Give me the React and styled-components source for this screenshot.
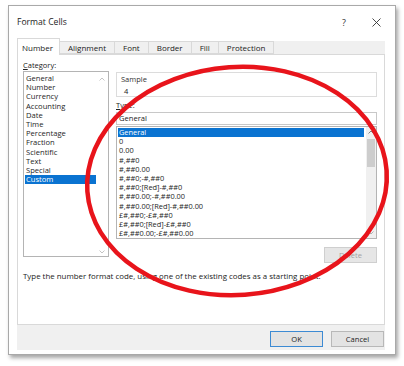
import React from 'react';
import styled, { createGlobalStyle } from 'styled-components';

const GlobalStyle = createGlobalStyle`
  html, body {
    margin: 0;
    padding: 0;
    background: #ffffff;
  }
  body {
    font-family: "Open Sans", "Noto Sans", sans-serif;
    color: #1a1a1a;
  }
`;

const categories = [
  'General', 'Number', 'Currency', 'Accounting', 'Date', 'Time',
  'Percentage', 'Fraction', 'Scientific', 'Text', 'Special', 'Custom'
];

const formats = [
  'General',
  '0',
  '0.00',
  '#,##0',
  '#,##0.00',
  '#,##0;-#,##0',
  '#,##0;[Red]-#,##0',
  '#,##0.00;-#,##0.00',
  '#,##0.00;[Red]-#,##0.00',
  '£#,##0;-£#,##0',
  '£#,##0;[Red]-£#,##0',
  '£#,##0.00;-£#,##0.00'
];

const tabs = ['Number', 'Alignment', 'Font', 'Border', 'Fill', 'Protection'];

const App = () => {
  return (
    <>
      <GlobalStyle />
      <Page>
        <Window>
          <TitleBar>
            <Title>Format Cells</Title>
            <TitleButtons>
              <HelpGlyph>?</HelpGlyph>
              <CloseGlyph>
                <svg width="9" height="9" viewBox="0 0 9 9">
                  <path d="M0.5 0.5 L8.5 8.5 M8.5 0.5 L0.5 8.5" stroke="#333" strokeWidth="0.9" fill="none" />
                </svg>
              </CloseGlyph>
            </TitleButtons>
          </TitleBar>

          <Body>
            <TabRow>
              {tabs.map((tab, i) => (
                <Tab key={tab} $active={i === 0}>{tab}</Tab>
              ))}
            </TabRow>

            <Panel>
              <Columns>
                <LeftColumn>
                  <FieldLabel><u>C</u>ategory:</FieldLabel>
                  <CategoryList>
                    {categories.map(c => (
                      <ListItem key={c} $selected={c === 'Custom'}>{c}</ListItem>
                    ))}
                    <ScrollArrow $top>
                      <svg width="6" height="4" viewBox="0 0 6 4"><path d="M0.5 3.5 L3 1 L5.5 3.5" stroke="#b5b5b5" strokeWidth="0.8" fill="none" /></svg>
                    </ScrollArrow>
                    <ScrollArrow>
                      <svg width="6" height="4" viewBox="0 0 6 4"><path d="M0.5 0.5 L3 3 L5.5 0.5" stroke="#b5b5b5" strokeWidth="0.8" fill="none" /></svg>
                    </ScrollArrow>
                  </CategoryList>
                </LeftColumn>

                <RightColumn>
                  <SampleBox>
                    <SampleLabel>Sample</SampleLabel>
                    <SampleValue>4</SampleValue>
                  </SampleBox>
                  <TypeLabel><u>T</u>ype:</TypeLabel>
                  <TypeInput>General</TypeInput>
                  <FormatList>
                    <FormatItems>
                      {formats.map((f, i) => (
                        <ListItem key={i} $selected={i === 0} $mono>{f}</ListItem>
                      ))}
                    </FormatItems>
                    <ScrollBar>
                      <ScrollButton>
                        <svg width="6" height="4" viewBox="0 0 6 4"><path d="M0.5 3.5 L3 1 L5.5 3.5" stroke="#606060" strokeWidth="0.8" fill="none" /></svg>
                      </ScrollButton>
                      <ScrollTrack>
                        <ScrollThumb />
                      </ScrollTrack>
                      <ScrollButton>
                        <svg width="6" height="4" viewBox="0 0 6 4"><path d="M0.5 0.5 L3 3 L5.5 0.5" stroke="#a0a0a0" strokeWidth="0.8" fill="none" /></svg>
                      </ScrollButton>
                    </ScrollBar>
                  </FormatList>
                  <ButtonRow>
                    <DeleteButton disabled>Delete</DeleteButton>
                  </ButtonRow>
                </RightColumn>
              </Columns>
              <Hint>Type the number format code, using one of the existing codes as a starting point.</Hint>
            </Panel>

            <Footer>
              <DialogButton $primary>OK</DialogButton>
              <DialogButton>Cancel</DialogButton>
            </Footer>
          </Body>
        </Window>

        <Circle width="404" height="366" viewBox="0 0 404 366">
          <ellipse cx="237" cy="181" rx="150" ry="114" transform="rotate(-4 237 181)" fill="none" stroke="#e8141b" strokeWidth="4.5" />
        </Circle>
      </Page>
    </>
  );
};

const Page = styled.div`
  position: relative;
  width: 404px;
  height: 366px;
  padding: 5px 0 0 8px;
  box-sizing: border-box;
  overflow: hidden;
`;

const Window = styled.div`
  width: 388px;
  height: 350px;
  box-sizing: border-box;
  background: #ffffff;
  border: 1px solid #a9a9a9;
  box-shadow: 2px 3px 4px rgba(0, 0, 0, 0.35);
  display: flex;
  flex-direction: column;
`;

const TitleBar = styled.div`
  height: 32px;
  display: flex;
  align-items: center;
  justify-content: space-between;
  padding: 0 14px 0 8px;
  box-sizing: border-box;
`;

const Title = styled.div`
  font-size: 8.6px;
  color: #222;
`;

const TitleButtons = styled.div`
  display: flex;
  align-items: center;
  gap: 26px;
`;

const HelpGlyph = styled.span`
  font-size: 9px;
  color: #333;
`;

const CloseGlyph = styled.span`
  display: flex;
  align-items: center;
`;

const Body = styled.div`
  flex: 1;
  display: flex;
  flex-direction: column;
  padding: 0 10px 4px 8px;
`;

const TabRow = styled.div`
  display: flex;
  align-items: flex-end;
  height: 16px;
  background: linear-gradient(#ffffff 0 3px, #f0f0f0 3px);
`;

const Tab = styled.div`
  height: ${({ $active }) => ($active ? '17px' : '13px')};
  margin-bottom: ${({ $active }) => ($active ? '-1px' : '0')};
  padding: 0 ${({ $active }) => ($active ? '6px' : '8px')} 0 ${({ $active }) => ($active ? '4px' : '8px')};
  display: flex;
  align-items: center;
  font-size: 8px;
  color: #222;
  background: ${({ $active }) => ($active ? '#ffffff' : '#f0f0f0')};
  border: 1px solid #d9d9d9;
  border-bottom: ${({ $active }) => ($active ? 'none' : '1px solid #d9d9d9')};
  margin-left: -1px;
  box-sizing: border-box;
  position: relative;
  z-index: ${({ $active }) => ($active ? 1 : 0)};
  &:first-child {
    margin-left: 0;
  }
`;

const Panel = styled.div`
  height: 271px;
  box-sizing: border-box;
  background: #ffffff;
  border: 1px solid #d9d9d9;
  padding: 4px 7px 0 5px;
  display: flex;
  flex-direction: column;
`;

const Columns = styled.div`
  display: grid;
  grid-template-columns: 86px 261px;
  column-gap: 7px;
`;

const LeftColumn = styled.div`
  display: flex;
  flex-direction: column;
`;

const FieldLabel = styled.div`
  font-size: 7.5px;
  height: 12px;
  line-height: 12px;
  color: #222;
  u {
    text-decoration-thickness: 0.5px;
  }
`;

const CategoryList = styled.div`
  position: relative;
  height: 186px;
  box-sizing: border-box;
  border: 1px solid #b4b4b4;
  padding: 2px 12px 0 1px;
`;

const ListItem = styled.div`
  height: 9.2px;
  line-height: 9.2px;
  font-size: ${({ $mono }) => ($mono ? '7.4px' : '7.6px')};
  padding-left: 1px;
  white-space: nowrap;
  color: ${({ $selected }) => ($selected ? '#ffffff' : '#1e1e1e')};
  background: ${({ $selected }) => ($selected ? '#0a73d1' : 'transparent')};
`;

const ScrollArrow = styled.div`
  position: absolute;
  right: 3px;
  top: ${({ $top }) => ($top ? '5px' : 'auto')};
  bottom: ${({ $top }) => ($top ? 'auto' : '2px')};
  display: flex;
`;

const RightColumn = styled.div`
  display: flex;
  flex-direction: column;
  padding-top: 13px;
`;

const SampleBox = styled.div`
  height: 25px;
  box-sizing: border-box;
  border: 1px solid #dcdcdc;
  padding: 0 4px;
  display: flex;
  flex-direction: column;
  justify-content: center;
  gap: 4px;
`;

const SampleLabel = styled.div`
  font-size: 7.5px;
  line-height: 8px;
  color: #333;
`;

const SampleValue = styled.div`
  font-size: 7.5px;
  line-height: 8px;
  padding-left: 3px;
  color: #222;
`;

const TypeLabel = styled.div`
  font-size: 7.5px;
  height: 15px;
  line-height: 17px;
  color: #222;
`;

const TypeInput = styled.div`
  height: 13px;
  box-sizing: border-box;
  border: 1px solid #c8c8c8;
  font-size: 7.6px;
  line-height: 11px;
  padding-left: 2px;
  color: #222;
`;

const FormatList = styled.div`
  margin-top: 1px;
  height: 113px;
  box-sizing: border-box;
  border: 1px solid #b4b4b4;
  display: flex;
  padding: 0 0 0 1px;
`;

const FormatItems = styled.div`
  flex: 1;
  padding-top: 1px;
  overflow: hidden;
`;

const ScrollBar = styled.div`
  width: 10px;
  margin-left: 2px;
  display: flex;
  flex-direction: column;
  background: #f0f0f0;
`;

const ScrollButton = styled.div`
  height: 10px;
  display: flex;
  align-items: center;
  justify-content: center;
`;

const ScrollTrack = styled.div`
  flex: 1;
  padding: 2px 1px 0;
`;

const ScrollThumb = styled.div`
  height: 28px;
  background: #cdcdcd;
`;

const ButtonRow = styled.div`
  display: flex;
  justify-content: flex-end;
  margin-top: 8px;
`;

const DeleteButton = styled.button`
  width: 53px;
  height: 16px;
  box-sizing: border-box;
  border: 1px solid #cfcfcf;
  background: #e6e6e6;
  color: #a3a3a3;
  font-family: inherit;
  font-size: 7.6px;
  padding: 0;
`;

const Hint = styled.div`
  margin-top: 8px;
  font-size: 7.9px;
  color: #222;
  white-space: nowrap;
`;

const Footer = styled.div`
  flex: 1;
  background: #f0f0f0;
  display: flex;
  justify-content: flex-end;
  align-items: center;
  gap: 8px;
  padding: 2px 1px 0 0;
`;

const DialogButton = styled.button`
  width: 53px;
  height: 16px;
  box-sizing: border-box;
  border: ${({ $primary }) => ($primary ? '1.5px solid #3c8ad3' : '1px solid #b8b8b8')};
  background: #e3e3e3;
  color: #222;
  font-family: inherit;
  font-size: 7.6px;
  padding: 0;
`;

const Circle = styled.svg`
  position: absolute;
  left: 0;
  top: 0;
  pointer-events: none;
`;

export default App;
